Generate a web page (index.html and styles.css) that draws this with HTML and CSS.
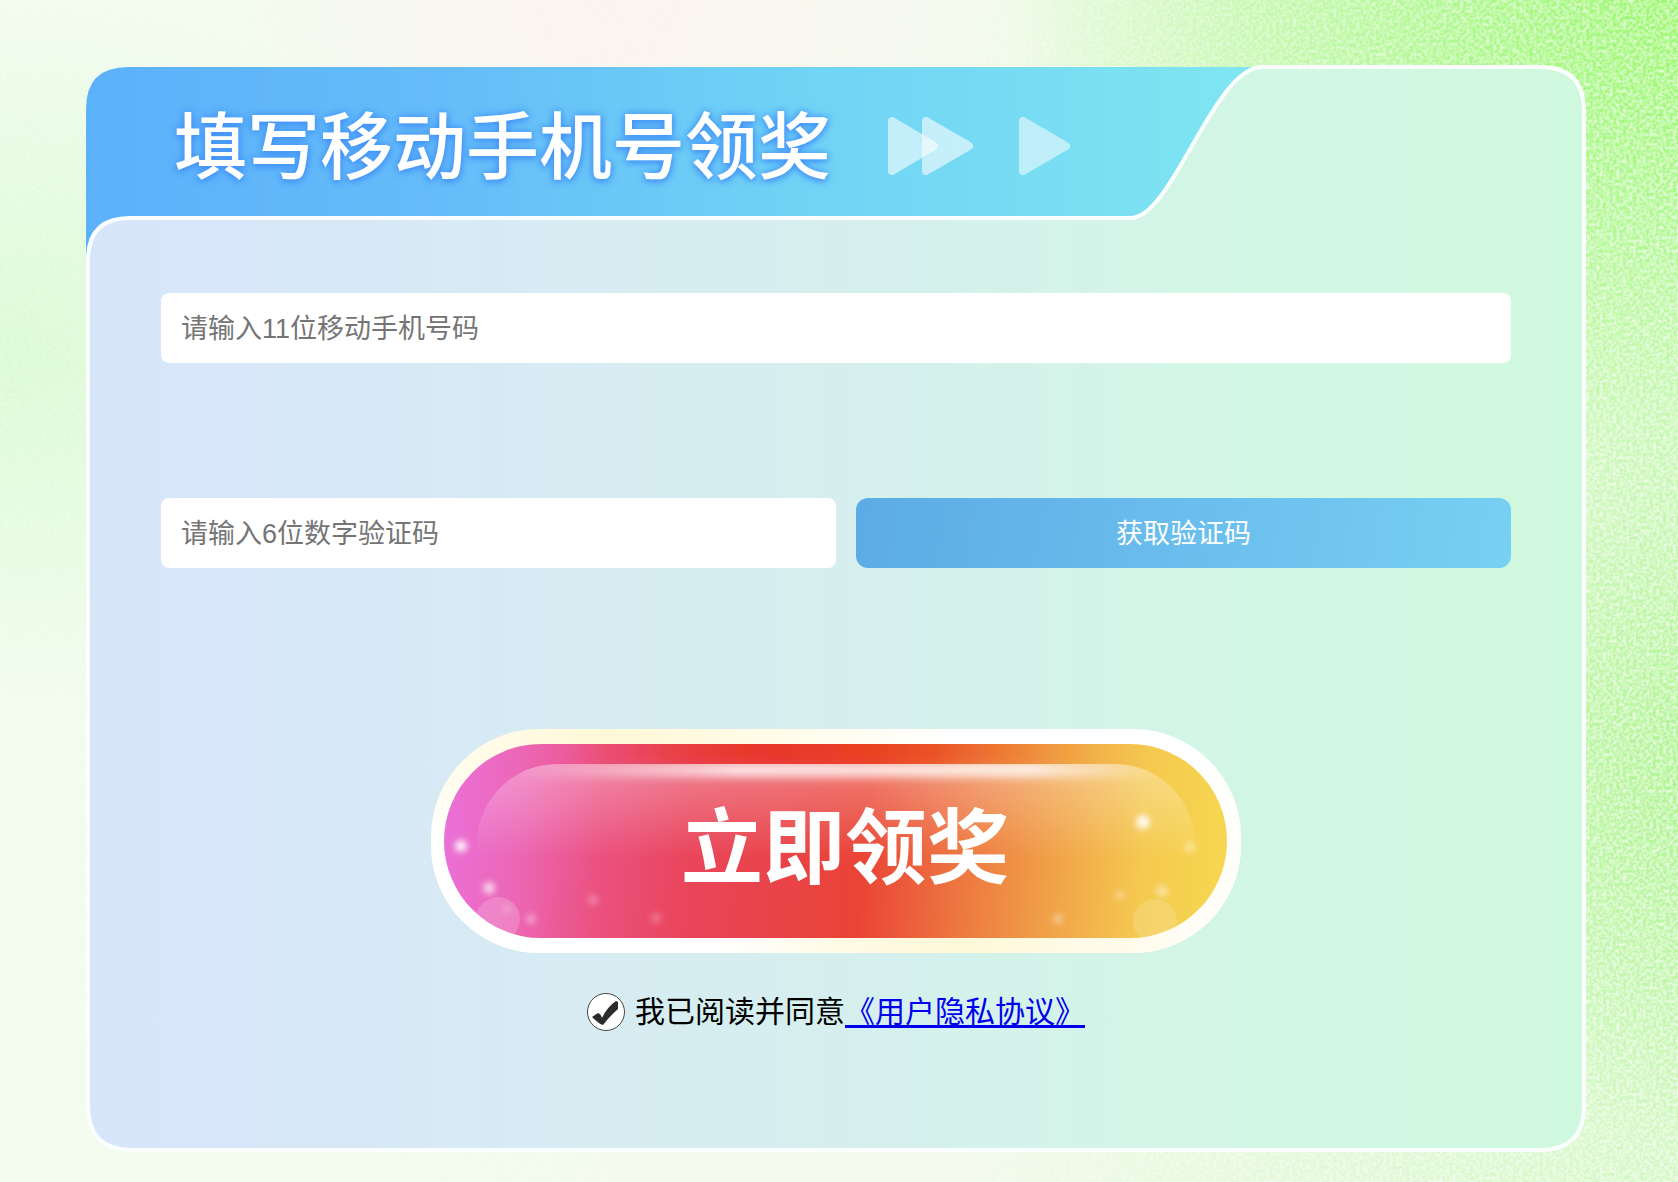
FILE: index.html
```html
<!DOCTYPE html>
<html lang="zh-CN">
<head>
<meta charset="utf-8">
<meta name="viewport" content="width=device-width, initial-scale=1">
<title>填写移动手机号领奖</title>
<link rel="stylesheet" href="styles.css">
</head>
<body>
<svg class="grain" aria-hidden="true" width="100%" height="100%">
  <defs>
    <filter id="noise" x="0" y="0" width="100%" height="100%" color-interpolation-filters="sRGB">
      <feTurbulence type="fractalNoise" baseFrequency="0.3" numOctaves="3" seed="4"/>
      <feColorMatrix values="0 0 0 0 1  0 0 0 0 1  0 0 0 0 1  2.4 0 0 0 -0.8"/>
    </filter>
    <linearGradient id="fade" x1="0" y1="0" x2="1" y2="0">
      <stop offset="0" stop-color="#fff" stop-opacity=".25"/>
      <stop offset=".5" stop-color="#fff" stop-opacity=".15"/>
      <stop offset=".8" stop-color="#fff" stop-opacity=".55"/>
      <stop offset="1" stop-color="#fff" stop-opacity=".7"/>
    </linearGradient>
    <mask id="grain-mask"><rect width="100%" height="100%" fill="url(#fade)"/></mask>
  </defs>
  <g mask="url(#grain-mask)"><rect width="100%" height="100%" filter="url(#noise)"/></g>
</svg>

<main class="page">
  <form class="card">
    <svg class="card-shape" viewBox="0 0 1500 1087" preserveAspectRatio="none" aria-hidden="true">
      <defs>
        <linearGradient id="tab" gradientUnits="userSpaceOnUse" x1="0" y1="0" x2="1170" y2="0">
          <stop offset="0" stop-color="#5cb1fb"/>
          <stop offset=".3" stop-color="#65bcf8"/>
          <stop offset=".6" stop-color="#70d2f5"/>
          <stop offset="1" stop-color="#7fe6f1"/>
        </linearGradient>
        <linearGradient id="panel" gradientUnits="userSpaceOnUse" x1="0" y1="540" x2="1500" y2="540">
          <stop offset="0" stop-color="#d7e5fa"/>
          <stop offset=".1" stop-color="#d7e7f9"/>
          <stop offset=".5" stop-color="#d6efee"/>
          <stop offset=".8" stop-color="#d2f7e4"/>
          <stop offset="1" stop-color="#cff9de"/>
        </linearGradient>
      </defs>
      <path fill="url(#tab)" d="M0 200V44Q0 2 42 2H1180L1080 154H60L4 200Z"/>
      <path fill="url(#panel)" stroke="#fbfeff" stroke-width="4" d="M2 195Q2 153 44 153H1045C1086 153 1128 2 1176 2H1454Q1498 2 1498 46V1041Q1498 1085 1454 1085H46Q2 1085 2 1041Z"/>
    </svg>

    <header class="card-head">
      <h1 class="title">填写移动手机号领奖</h1>
      <svg class="arrows" viewBox="0 0 182 60" aria-hidden="true">
        <g stroke-width="8" stroke-linejoin="round">
          <g opacity=".58"><path fill="#fff" stroke="#fff" d="M4 5V55L46 30Z"/></g>
          <g opacity=".58"><path fill="#fff" stroke="#fff" d="M38 5V55L81 30Z"/></g>
          <g opacity=".52"><path fill="#fff" stroke="#fff" d="M135 5V55L178 30Z"/></g>
        </g>
      </svg>
    </header>

    <div class="fields">
      <input class="field" type="tel" aria-label="移动手机号码" placeholder="请输入11位移动手机号码">
      <div class="code-row">
        <input class="field" type="text" inputmode="numeric" aria-label="验证码" placeholder="请输入6位数字验证码">
        <button class="code-button" type="button">获取验证码</button>
      </div>
    </div>

    <button class="claim" type="submit">
      <svg class="claim-shape" viewBox="0 0 810 224" aria-hidden="true">
        <defs>
          <linearGradient id="rim" x1="0" y1="0" x2="1" y2="0">
            <stop offset="0" stop-color="#fffdf0"/>
            <stop offset=".22" stop-color="#fff8d6"/>
            <stop offset=".5" stop-color="#fffdf0"/>
            <stop offset=".65" stop-color="#fff"/>
          </linearGradient>
          <linearGradient id="rim-low" x1="0" y1="0" x2="1" y2="0">
            <stop offset=".35" stop-color="#fff"/>
            <stop offset=".5" stop-color="#fffbe6"/>
            <stop offset=".65" stop-color="#fff8d8"/>
            <stop offset="1" stop-color="#fffefa"/>
          </linearGradient>
          <linearGradient id="down" x1="0" y1="0" x2="0" y2="1">
            <stop offset=".2" stop-color="#000"/>
            <stop offset=".6" stop-color="#fff"/>
          </linearGradient>
          <mask id="low-half"><rect width="810" height="224" fill="url(#down)"/></mask>
          <linearGradient id="pill" gradientUnits="userSpaceOnUse" x1="13" y1="80" x2="790" y2="130">
            <stop offset="0" stop-color="#ea70d8"/>
            <stop offset=".1" stop-color="#ec66b4"/>
            <stop offset=".2" stop-color="#eb5282"/>
            <stop offset=".32" stop-color="#e9455a"/>
            <stop offset=".45" stop-color="#e94346"/>
            <stop offset=".54" stop-color="#ea4435"/>
            <stop offset=".66" stop-color="#ed7440"/>
            <stop offset=".78" stop-color="#f0a048"/>
            <stop offset=".9" stop-color="#f5c94f"/>
            <stop offset="1" stop-color="#f6d650"/>
          </linearGradient>
          <linearGradient id="gloss" x1="0" y1="0" x2="0" y2="1">
            <stop offset="0" stop-color="#fff" stop-opacity=".3"/>
            <stop offset=".2" stop-color="#fff" stop-opacity=".2"/>
            <stop offset=".55" stop-color="#fff" stop-opacity="0"/>
          </linearGradient>
          <linearGradient id="shine" x1="0" y1="0" x2="1" y2="0">
            <stop offset="0" stop-color="#fff" stop-opacity="0"/>
            <stop offset=".35" stop-color="#fff" stop-opacity=".8"/>
            <stop offset=".8" stop-color="#fff" stop-opacity=".8"/>
            <stop offset="1" stop-color="#fff" stop-opacity="0"/>
          </linearGradient>
          <linearGradient id="edge" x1="0" y1="0" x2="1" y2="0">
            <stop offset=".1" stop-color="#e9341f" stop-opacity="0"/>
            <stop offset=".4" stop-color="#e8331f" stop-opacity=".8"/>
            <stop offset=".65" stop-color="#e94a1c" stop-opacity=".7"/>
            <stop offset=".9" stop-color="#f09020" stop-opacity="0"/>
          </linearGradient>
          <filter id="soft" x="-20%" y="-100%" width="140%" height="300%"><feGaussianBlur stdDeviation="5"/></filter>
          <filter id="dot" x="-100%" y="-100%" width="300%" height="300%"><feGaussianBlur stdDeviation="3"/></filter>
          <clipPath id="pill-clip"><rect x="13" y="15" width="783" height="194" rx="97"/></clipPath>
          <clipPath id="gloss-clip"><rect x="46" y="35" width="718" height="170" rx="80"/></clipPath>
        </defs>
        <rect width="810" height="224" rx="108" fill="url(#rim)"/>
        <rect width="810" height="224" rx="108" fill="url(#rim-low)" mask="url(#low-half)"/>
        <g clip-path="url(#pill-clip)">
          <rect x="13" y="15" width="783" height="194" fill="url(#pill)"/>
          <rect x="80" y="8" width="650" height="26" fill="url(#edge)" filter="url(#soft)"/>
          <rect x="46" y="35" width="718" height="170" rx="80" fill="url(#gloss)"/>
          <g clip-path="url(#gloss-clip)"><rect x="80" y="33" width="650" height="15" fill="url(#shine)" filter="url(#soft)"/></g>
          <g fill="#fff">
            <circle cx="67" cy="190" r="22" opacity=".18"/>
            <circle cx="724" cy="192" r="22" opacity=".16"/>
            <g filter="url(#dot)">
              <circle cx="30" cy="117" r="6" opacity=".9"/>
              <circle cx="58" cy="159" r="6" opacity=".7"/>
              <circle cx="100" cy="190" r="5" opacity=".4"/>
              <circle cx="76" cy="180" r="5" opacity=".2"/>
              <circle cx="162" cy="171" r="5" opacity=".3"/>
              <circle cx="225" cy="189" r="5" opacity=".25"/>
              <circle cx="712" cy="93" r="7" opacity=".9"/>
              <circle cx="759" cy="118" r="6" opacity=".35"/>
              <circle cx="731" cy="162" r="6" opacity=".45"/>
              <circle cx="689" cy="166" r="5" opacity=".3"/>
              <circle cx="627" cy="190" r="5" opacity=".4"/>
            </g>
          </g>
        </g>
      </svg>
      <span class="claim-text">立即领奖</span>
    </button>

    <div class="agreement">
      <input class="agree-box" id="agree" type="checkbox" checked>
      <svg class="agree-tick" viewBox="0 0 38 38" aria-hidden="true">
        <path fill="#2b2b2b" d="M5 24L11 20Q14 21 15 25Q20 14 29 8L31 9V16Q23 23 16 32Q12 31 5 24Z"/>
      </svg>
      <label for="agree">我已阅读并同意</label><a class="policy" href="#policy">《用户隐私协议》</a>
    </div>
  </form>
</main>
</body>
</html>
```

FILE: styles.css
```css
* {
  box-sizing: border-box;
}

body {
  margin: 0;
  min-height: 100vh;
  position: relative;
  font-family: "Liberation Sans", "Noto Sans CJK SC", sans-serif;
  color: #000;
  background:
    radial-gradient(ellipse 42% 44% at 102% 0%, #97f868 0%, rgba(164, 248, 128, 0.8) 40%, rgba(205, 250, 190, 0) 100%),
    radial-gradient(ellipse 24% 32% at 104% 66%, #a8f488 0%, rgba(190, 248, 165, 0) 100%),
    radial-gradient(ellipse 22% 30% at 36% 0%, #fcf3ef 0%, rgba(252, 245, 241, 0) 100%),
    radial-gradient(ellipse 30% 30% at 1% 30%, #dafbd4 0%, rgba(225, 251, 220, 0) 100%),
    linear-gradient(90deg, #f2fcee, #f4faee 55%, #d2f8c2);
}

.grain {
  position: absolute;
  inset: 0;
}

.page {
  position: relative;
  padding: 65px 92px 30px 86px;
}

.card {
  position: relative;
  display: flex;
  flex-direction: column;
  padding-bottom: 120px;
}

.card-shape {
  position: absolute;
  inset: 0;
  width: 100%;
  height: 100%;
}

.card-head {
  position: relative;
  display: flex;
  align-items: center;
  gap: 57px;
  height: 162px;
  padding-left: 88px;
}

.title {
  margin: 0;
  padding-top: 4px;
  font-size: 73px;
  line-height: 88px;
  font-weight: 500;
  white-space: nowrap;
  color: #fff;
  text-shadow: 0 0 8px #4292f8, 0 2px 6px #4292f8;
}

.arrows {
  width: 182px;
  height: 60px;
}

.fields {
  position: relative;
  display: flex;
  flex-direction: column;
  gap: 135px;
  padding: 66px 75px 0;
}

.code-row {
  display: grid;
  grid-template-columns: 675fr 655fr;
  gap: 20px;
}

.field {
  width: 100%;
  min-width: 0;
  height: 70px;
  padding: 2px 20px 0;
  border: 0;
  border-radius: 8px;
  background: #fff;
  font-family: inherit;
  font-size: 27px;
}

.field::placeholder {
  color: #757575;
}

.code-button {
  height: 70px;
  padding: 0 0 4px;
  border: 0;
  border-radius: 12px;
  background: linear-gradient(100deg, #5cabe6, #78d0f3);
  color: #fff;
  font-family: inherit;
  font-size: 27px;
}

.claim {
  position: relative;
  align-self: center;
  width: 810px;
  max-width: 90%;
  height: 224px;
  margin-top: 161px;
  padding: 16px 0 0 18px;
  border: 0;
  background: none;
  font-family: inherit;
}

.claim-shape {
  position: absolute;
  inset: 0;
  width: 100%;
  height: 100%;
}

.claim-text {
  position: relative;
  font-size: 82px;
  line-height: 100px;
  font-weight: 700;
  color: #fff;
}

.agreement {
  position: relative;
  display: grid;
  grid-template-columns: 38px auto auto;
  justify-content: center;
  align-items: center;
  margin-top: 39px;
  font-size: 30px;
  line-height: 40px;
}

.agree-box {
  grid-area: 1 / 1;
  appearance: none;
  width: 38px;
  height: 38px;
  margin: 0;
  border: 1px solid #444;
  border-radius: 50%;
  background: #fff;
}

.agree-tick {
  grid-area: 1 / 1;
  width: 38px;
  height: 38px;
  position: relative;
  pointer-events: none;
}

.agreement label {
  padding-left: 10px;
}

.policy {
  color: #0000ee;
  text-decoration: underline;
  text-decoration-thickness: 3px;
  text-underline-offset: 3px;
  text-decoration-skip-ink: none;
}
```
